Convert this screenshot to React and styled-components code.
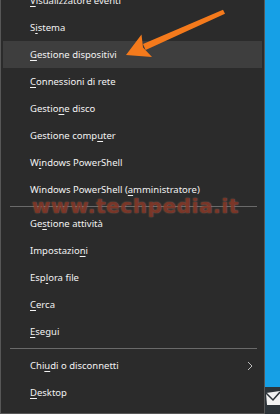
import styled, { createGlobalStyle } from "styled-components";

const GlobalStyle = createGlobalStyle`
  body {
    margin: 0;
    background: #2b3136;
    overflow: hidden;
  }
`;

const Screen = styled.div`
  position: relative;
  display: flex;
  width: 280px;
  height: 414px;
  overflow: hidden;
  font-family: "Noto Sans", "Open Sans", sans-serif;
`;

const Menu = styled.div`
  flex: 0 0 265px;
  box-sizing: border-box;
  height: 414px;
  background: #2b2b2b;
  border: 1px solid #575757;
  border-top: none;
  overflow: hidden;
`;

const List = styled.ul`
  list-style: none;
  margin: -13px 0 0 0;
  padding: 0;
`;

const Item = styled.li`
  display: flex;
  align-items: center;
  height: 27px;
  margin: 0 2px;
  padding: 0 9px 0 27px;
  font-size: 9.5px;
  color: #f2f2f2;
  white-space: nowrap;
  background: ${(p) => (p.active ? "#3e3e3e" : "transparent")};

  u {
    text-underline-offset: 1.5px;
  }
`;

const Separator = styled.li`
  height: 1px;
  margin: 3px 7px 3px 9px;
  background: #6a6a6a;
`;

const Chevron = styled.svg`
  margin-left: auto;
`;

const Side = styled.div`
  flex: 1;
  display: flex;
  flex-direction: column;
`;

const Desktop = styled.div`
  flex: 0 0 387px;
  background: #16a0e6;
`;

const Taskbar = styled.div`
  flex: 1;
  background: #2d3439;
  padding-top: 2px;
`;

const Watermark = styled.div`
  position: absolute;
  left: 32px;
  top: 194px;
  font-family: "DejaVu Sans", sans-serif;
  font-weight: bold;
  font-size: 20px;
  letter-spacing: 0.6px;
  color: rgba(118, 42, 28, 0.78);
  text-shadow: 0 0 1.5px rgba(225, 150, 120, 0.6);
  pointer-events: none;
`;

const Arrow = styled.svg`
  position: absolute;
  left: 0;
  top: 0;
  pointer-events: none;
`;

const items = [
  ["", "V", "isualizzatore eventi"],
  ["S", "i", "stema"],
  ["", "G", "estione dispositivi"],
  ["", "C", "onnessioni di rete"],
  ["Gestio", "n", "e disco"],
  ["Gestione comp", "u", "ter"],
  ["W", "i", "ndows PowerShell"],
  ["Windows PowerShell (", "a", "mministratore)"],
  "sep",
  ["Ge", "s", "tione attività"],
  ["Impostazio", "n", "i"],
  ["Esp", "l", "ora file"],
  ["", "C", "erca"],
  ["", "E", "segui"],
  "sep",
  ["Chi", "u", "di o disconnetti"],
  ["", "D", "esktop"],
];

const App = () => {
  return (
    <>
      <GlobalStyle />
      <Screen>
        <Menu>
          <List>
            {items.map((it, i) =>
              it === "sep" ? (
                <Separator key={i} />
              ) : (
                <Item key={i} active={i === 2}>
                  {it[0]}
                  <u>{it[1]}</u>
                  {it[2]}
                  {it[0] === "Chi" && (
                    <Chevron width="6" height="10" viewBox="0 0 6 10">
                      <polyline points="1,1 5,5 1,9" fill="none" stroke="#bdbdbd" strokeWidth="1" />
                    </Chevron>
                  )}
                </Item>
              )
            )}
          </List>
        </Menu>
        <Side>
          <Desktop />
          <Taskbar>
            <svg width="15" height="16" viewBox="0 0 15 16">
              <polygon points="1,3 15,1 15,15 2,15" fill="#f2f2f2" />
              <polyline points="1,3 8,10 15,2" fill="none" stroke="#2d3439" strokeWidth="1.5" />
            </svg>
          </Taskbar>
        </Side>
        <Watermark>www.techpedia.it</Watermark>
        <Arrow width="280" height="80" viewBox="0 0 280 80">
          <polygon points="225,13.8 223,9.8 143,44 145.6,50" fill="#f47a1c" />
          <polygon points="126,55 141.5,34.5 143,47.5 152,57" fill="#f47a1c" />
        </Arrow>
      </Screen>
    </>
  );
};

export default App;
